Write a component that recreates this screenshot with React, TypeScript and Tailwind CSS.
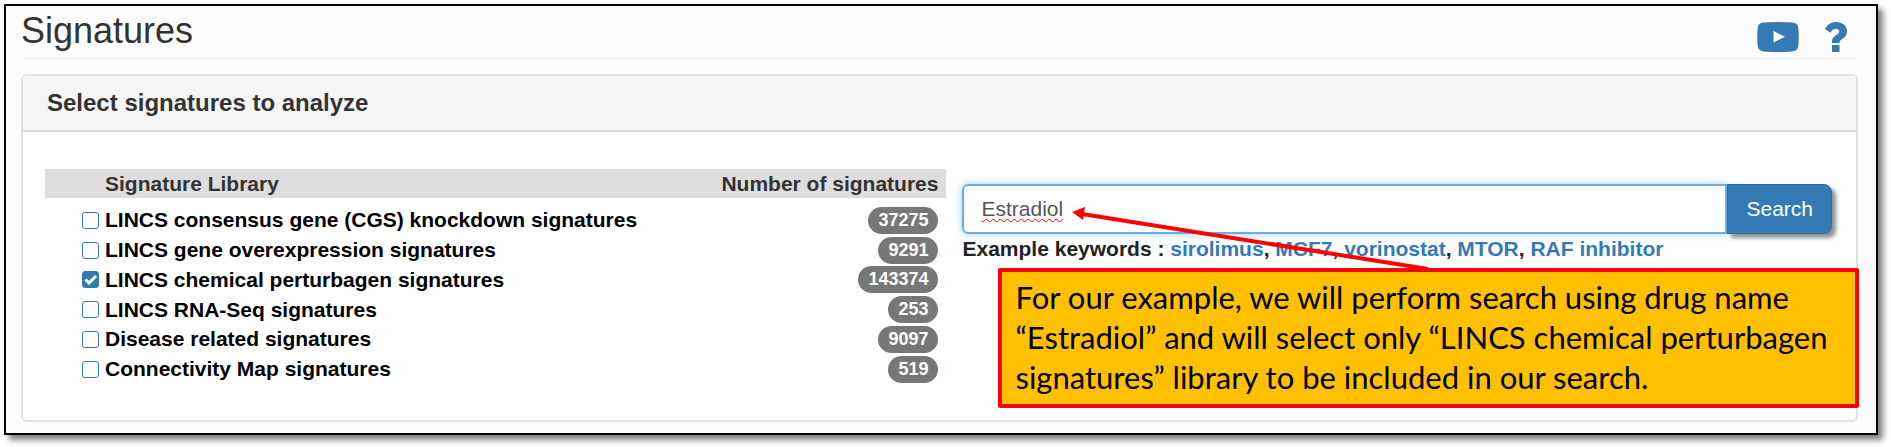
const libraries = [
    { id: "cgs", name: "LINCS consensus gene (CGS) knockdown signatures", count: 37275 },
    { id: "oe", name: "LINCS gene overexpression signatures", count: 9291 },
    { id: "cp", name: "LINCS chemical perturbagen signatures", count: 143374, checked: true },
    { id: "rnaseq", name: "LINCS RNA-Seq signatures", count: 253 },
    { id: "disease", name: "Disease related signatures", count: 9097 },
    { id: "cmap", name: "Connectivity Map signatures", count: 519 },
];

const keywords = ["sirolimus", "MCF7", "vorinostat", "MTOR", "RAF inhibitor"];

const IconVideo = ({ className }: { className?: string }) => (
    <svg viewBox="0 0 42 30" className={className} aria-hidden="true">
        <path
            fill="currentColor"
            fillRule="evenodd"
            d="M7 .6Q21-.4 35 .6 40.800.8 41.300 6 42.200 15 41.300 24 40.800 29.200 35 29.400 21 30.400 7 29.400 1.200 29.200.7 24-.2 15 .7 6 1.200.8 7 .6ZM16.500 9v11.500l11.500-5.750Z"
        />
    </svg>
);

const IconHelp = ({ className }: { className?: string }) => (
    <svg viewBox="0 0 22 30" className={className} aria-hidden="true">
        <path
            fill="currentColor"
            d="M7 23h7.500v7H7ZM0 7C2.500 2.500 6 0 11.300 0 17 0 22 3.800 22 9c0 5-3 7-5.500 8.500-1.500.9-2 1.800-2 3.500H7v-1.500c0-3 1.500-4.800 4-6.300 2-1.200 3.200-2 3.200-3.700 0-1.600-1.500-2.700-3.400-2.700-2.300 0-3.500 1-5.500 4Z"
        />
    </svg>
);

const Header = () => (
    <header className="flex h-[53px] items-start justify-between border-b border-[#eeeeee] pr-[11px]">
        <h1 className="pt-[5px] text-4xl leading-10 text-[#333333]">Signatures</h1>
        <nav className="flex items-center gap-[26px] pt-4 text-[#337ab7]">
            <a href="#video" aria-label="Video tutorial">
                <IconVideo className="h-[30px] w-[42px]" />
            </a>
            <a href="#help" aria-label="Help">
                <IconHelp className="h-[30px] w-[22px]" />
            </a>
        </nav>
    </header>
);

const LibraryTable = () => (
    <table className="mt-1 h-[215px] w-full text-[21px] leading-[28px]">
        <thead className="bg-[#dddddd] text-[#333333]">
            <tr>
                <th className="h-[29px] p-0 pl-[60px] text-left">Signature Library</th>
                <th className="h-[29px] p-0 pr-2 text-right">Number of signatures</th>
            </tr>
        </thead>
        <tbody className="before:block before:h-[7px]">
            {libraries.map(({ id, name, count, checked }) => (
                <tr key={id}>
                    <td className="p-0 pl-[37px]">
                        <div className="flex items-center gap-[6px] text-black">
                            <input
                                id={id}
                                type="checkbox"
                                defaultChecked={checked}
                                className="peer size-[17px] shrink-0 appearance-none rounded-[3px] border border-[#337ab7] checked:bg-[#337ab7]"
                            />
                            <svg
                                viewBox="0 0 17 17"
                                className="pointer-events-none absolute hidden size-[17px] peer-checked:block"
                                aria-hidden="true"
                            >
                                <path d="M3.500 8.500l3.500 3.500L14 5" fill="none" stroke="#fff" strokeWidth="3" />
                            </svg>
                            <label htmlFor={id} className="font-bold">
                                {name}
                            </label>
                        </div>
                    </td>
                    <td className="p-0 pr-2 text-right">
                        <span className="float-right block h-[27px] rounded-full bg-[#777777] px-[10px] text-lg leading-[26px] font-bold text-white">
                            {count}
                        </span>
                    </td>
                </tr>
            ))}
        </tbody>
    </table>
);

const Callout = () => (
    <>
        <svg
            viewBox="0 0 360 60"
            className="pointer-events-none absolute top-[27px] left-[110px] h-[60px] w-[360px] overflow-visible"
            aria-hidden="true"
        >
            <path d="M10 3 356 58" stroke="#ff0000" strokeWidth="4" />
            <path d="M0 1 13-4 11 9Z" fill="#ff0000" />
        </svg>
        <p className="absolute top-[84px] -right-[27px] left-9 rounded-xs border-4 border-[#ff0000] bg-[#ffc000] px-[13px] pt-[5px] pb-[7px] font-['Lato',sans-serif] text-[31px] leading-10 text-black">
            For our example, we will perform search using drug name
            <br />
            “Estradiol” and will select only “LINCS chemical perturbagen
            <br />
            signatures” library to be included in our search.
        </p>
    </>
);

const SearchBox = () => (
    <div className="relative mt-[19px] text-[21px]">
        <form className="flex h-[50px]">
            <input
                type="text"
                aria-label="Search signatures"
                defaultValue="Estradiol"
                spellCheck={false}
                className="min-w-0 flex-1 rounded-l-md border-2 border-[#66afe9] bg-white px-[17px] text-[#555555] underline decoration-[#ff0000] decoration-wavy decoration-1 underline-offset-2 shadow-[0_0_8px_rgba(102,175,233,0.6)] outline-none"
            />
            <button
                type="button"
                className="rounded-r-lg border border-[#2e6da4] bg-[#337ab7] px-[18px] text-white shadow-[4px_4px_4px_rgba(0,0,0,0.45)]"
            >
                Search
            </button>
        </form>
        <p className="leading-[30px] font-bold text-[#222222]">
            Example keywords :{" "}
            {keywords.map((word, idx) => (
                <span key={word}>
                    {idx > 0 && ", "}
                    <a href={`#${word}`} className="text-[#337ab7]">
                        {word}
                    </a>
                </span>
            ))}
        </p>
        <Callout />
    </div>
);

export default function App() {
    return (
        <div className="bg-white pt-1 pr-[13px] pb-[13px] pl-1 font-['Liberation_Sans',Arial,sans-serif]">
            <main className="border-2 border-black bg-[#fcfcfc] pr-[18px] pb-[11px] pl-[15px] shadow-[5px_5px_6px_rgba(0,0,0,0.5)]">
                <Header />
                <section className="mt-[15px] rounded-md border-2 border-[#e2e2e2] bg-white">
                    <h2 className="rounded-t-md border-b-2 border-[#dddddd] bg-[#f5f5f5] px-6 text-2xl leading-[54px] font-bold text-[#333333]">
                        Select signatures to analyze
                    </h2>
                    <div className="grid grid-cols-[902fr_870fr] gap-4 pt-[33px] pr-[24px] pb-9 pl-[22px]">
                        <LibraryTable />
                        <SearchBox />
                    </div>
                </section>
            </main>
        </div>
    );
}
